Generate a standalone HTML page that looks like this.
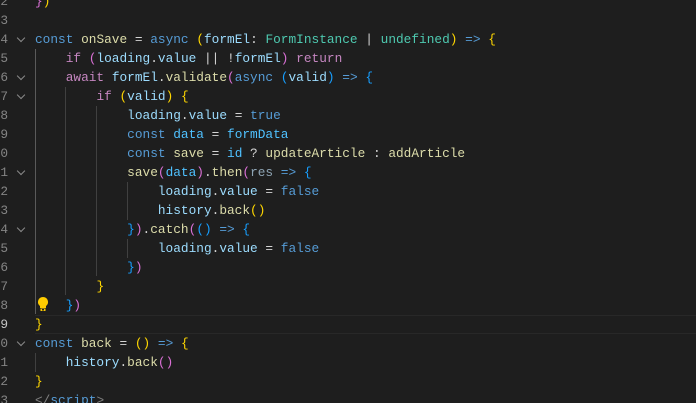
<!DOCTYPE html>
<html><head><meta charset="utf-8"><style>
html,body{margin:0;padding:0;background:#1e1e1e;width:696px;height:403px;overflow:hidden}
.ed{position:relative;width:696px;height:403px;font-family:"Liberation Mono",monospace;font-size:12.8px;}
.ln{position:absolute;left:0;height:19px;line-height:19px;white-space:pre;width:696px}
.num{position:absolute;left:-1px;color:#858585;width:9px;text-align:right}
.code{position:absolute;left:35px;color:#d4d4d4}
.fold{position:absolute;left:18px;top:5px;width:5px;height:5px;border-right:1.2px solid #8a8a8a;border-bottom:1.2px solid #8a8a8a;transform:rotate(45deg)}
.k{color:#569cd6}.c{color:#c586c0}.v{color:#9cdcfe}.f{color:#dcdcaa}.t{color:#4ec9b0}.n{color:#4fc1ff}.u{color:#8ea4b4}
.b1{color:#ffd700}.b2{color:#da70d6}.b3{color:#179fff}
.g{position:absolute;width:1px;background:#404040}
.cur{position:absolute;left:35px;top:315px;width:661px;height:17px;border-top:1px solid #282828;border-bottom:1px solid #282828}
</style></head><body><div class="ed">
<div class="cur"></div>
<div class="g" style="left:35px;top:49px;height:265px;background:#5a5a5a"></div>
<div class="g" style="left:65px;top:87px;height:208px"></div>
<div class="g" style="left:96px;top:106px;height:170px"></div>
<div class="g" style="left:127px;top:182px;height:38px"></div>
<div class="g" style="left:127px;top:239px;height:19px"></div>
<div class="g" style="left:35px;top:353px;height:19px"></div>

<div class="ln" style="top:-8.5px"><span class="num">2</span><span class="code"><span class="b2">}</span><span class="b1">)</span></span></div>
<div class="ln" style="top:10.5px"><span class="num">3</span></div>
<div class="ln" style="top:29.5px"><span class="num">4</span><span class="fold"></span><span class="code"><span class="k">const</span> <span class="f">onSave</span> = <span class="k">async</span> <span class="b1">(</span><span class="v">formEl</span>: <span class="t">FormInstance</span> | <span class="t">undefined</span><span class="b1">)</span> <span class="k">=&gt;</span> <span class="b1">{</span></span></div>
<div class="ln" style="top:48.5px"><span class="num">5</span><span class="code">    <span class="c">if</span> <span class="b2">(</span><span class="v">loading</span>.<span class="v">value</span> || !<span class="v">formEl</span><span class="b2">)</span> <span class="c">return</span></span></div>
<div class="ln" style="top:67.5px"><span class="num">6</span><span class="fold"></span><span class="code">    <span class="c">await</span> <span class="v">formEl</span>.<span class="f">validate</span><span class="b2">(</span><span class="k">async</span> <span class="b3">(</span><span class="v">valid</span><span class="b3">)</span> <span class="k">=&gt;</span> <span class="b3">{</span></span></div>
<div class="ln" style="top:86.5px"><span class="num">7</span><span class="fold"></span><span class="code">        <span class="c">if</span> <span class="b1">(</span><span class="v">valid</span><span class="b1">)</span> <span class="b1">{</span></span></div>
<div class="ln" style="top:105.5px"><span class="num">8</span><span class="code">            <span class="v">loading</span>.<span class="v">value</span> = <span class="k">true</span></span></div>
<div class="ln" style="top:124.5px"><span class="num">9</span><span class="code">            <span class="k">const</span> <span class="n">data</span> = <span class="n">formData</span></span></div>
<div class="ln" style="top:143.5px"><span class="num">0</span><span class="code">            <span class="k">const</span> <span class="f">save</span> = <span class="n">id</span> ? <span class="f">updateArticle</span> : <span class="f">addArticle</span></span></div>
<div class="ln" style="top:162.5px"><span class="num">1</span><span class="fold"></span><span class="code">            <span class="f">save</span><span class="b2">(</span><span class="n">data</span><span class="b2">)</span>.<span class="f">then</span><span class="b2">(</span><span class="u">res</span> <span class="k">=&gt;</span> <span class="b3">{</span></span></div>
<div class="ln" style="top:181.5px"><span class="num">2</span><span class="code">                <span class="v">loading</span>.<span class="v">value</span> = <span class="k">false</span></span></div>
<div class="ln" style="top:200.5px"><span class="num">3</span><span class="code">                <span class="v">history</span>.<span class="f">back</span><span class="b1">()</span></span></div>
<div class="ln" style="top:219.5px"><span class="num">4</span><span class="fold"></span><span class="code">            <span class="b3">}</span><span class="b2">)</span>.<span class="f">catch</span><span class="b2">(</span><span class="b3">()</span> <span class="k">=&gt;</span> <span class="b3">{</span></span></div>
<div class="ln" style="top:238.5px"><span class="num">5</span><span class="code">                <span class="v">loading</span>.<span class="v">value</span> = <span class="k">false</span></span></div>
<div class="ln" style="top:257.5px"><span class="num">6</span><span class="code">            <span class="b3">}</span><span class="b2">)</span></span></div>
<div class="ln" style="top:276.5px"><span class="num">7</span><span class="code">        <span class="b1">}</span></span></div>
<div class="ln" style="top:295.5px"><span class="num">8</span><span class="code">    <span class="b3">}</span><span class="b2">)</span></span></div>
<svg style="position:absolute;left:37px;top:296px" width="12" height="16" viewBox="0 0 12 16"><path d="M6 1a5 5 0 0 0-3 9v2h6v-2a5 5 0 0 0-3-9z" fill="#ffcc00"/><rect x="3.5" y="12.5" width="5" height="2.5" fill="#ffcc00"/><rect x="5" y="13" width="2" height="1.5" fill="#1e1e1e"/></svg>
<div class="ln" style="top:314.5px"><span class="num" style="color:#c6c6c6">9</span><span class="code"><span class="b1">}</span></span></div>
<div class="ln" style="top:333.5px"><span class="num">0</span><span class="fold"></span><span class="code"><span class="k">const</span> <span class="f">back</span> = <span class="b1">()</span> <span class="k">=&gt;</span> <span class="b1">{</span></span></div>
<div class="ln" style="top:352.5px"><span class="num">1</span><span class="code">    <span class="v">history</span>.<span class="f">back</span><span class="b2">()</span></span></div>
<div class="ln" style="top:371.5px"><span class="num">2</span><span class="code"><span class="b1">}</span></span></div>
<div class="ln" style="top:390.5px"><span class="num">3</span><span class="code"><span style="color:#808080">&lt;/</span><span class="k">script</span><span style="color:#808080">&gt;</span></span></div>
</div></body></html>
